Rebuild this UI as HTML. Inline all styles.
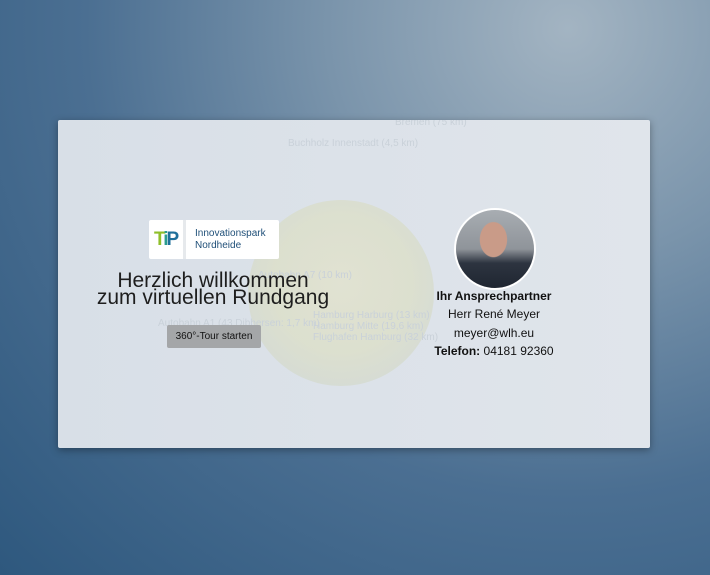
<!DOCTYPE html>
<html><head><meta charset="utf-8"><style>
body{margin:0;width:710px;height:575px;overflow:hidden;font-family:"Liberation Sans",sans-serif;
background:radial-gradient(ellipse at 80% 5%,#a3b4c2 0%,#7a94ab 30%,#4b6f92 60%,#2e587e 100%);position:relative}
.card{position:absolute;left:58px;top:120px;width:592px;height:328px;background:linear-gradient(90deg,#d8dfe7,#e0e5eb);border-radius:2px;box-shadow:0 2px 8px rgba(0,0,0,.35);overflow:hidden}
.globe{position:absolute;left:190px;top:80px;width:186px;height:186px;border-radius:50%;background:radial-gradient(circle at 50% 45%,#e2e2cc 0%,#dcdfc8 50%,#d3d9d0 80%,#d4dae0 100%);opacity:.8}
.faint{position:absolute;color:#c9d1d9;font-size:10px;white-space:nowrap}
.logo{position:absolute;left:91px;top:100px;width:130px;height:39px;background:#fff;border-radius:2px}
.logo .sep{position:absolute;left:34px;top:0;width:3px;height:39px;background:#e6e9ec}
.title{position:absolute;left:20px;width:270px;top:152px;text-align:center;font-size:21px;line-height:17px;color:#1e1e1e}
.btn{position:absolute;left:109px;top:205px;width:94px;height:23px;background:#a4a6a8;border-radius:2px;font-size:10px;text-align:center;line-height:23px;color:#111}
.photo{position:absolute;left:396px;top:88px;width:78px;height:78px;border-radius:50%;border:2px solid #fff;background:radial-gradient(ellipse 14px 18px at 48% 38%,#c99b88 0 95%,transparent 100%),linear-gradient(180deg,#a8adb2 0%,#8f949a 50%,#2d3440 68%,#1f2631 100%);overflow:hidden}
.info{position:absolute;left:356px;width:160px;text-align:center;font-size:12px;color:#111}
</style></head><body>
<div class="card">
 <div class="globe"></div>
 <div class="faint" style="left:230px;top:18px">Buchholz Innenstadt (4,5 km)</div>
 <div class="faint" style="left:337px;top:-3px">Bremen (75 km)</div>
 <div class="faint" style="left:200px;top:150px">Autobahn A7 (10 km)</div>
 <div class="faint" style="left:100px;top:198px">Autobahn A1 (43 Dibbersen: 1,7 km)</div>
 <div class="faint" style="left:255px;top:190px">Hamburg Harburg (13 km)<br>Hamburg Mitte (19,6 km)<br>Flughafen Hamburg (32 km)</div>
 <div class="logo"><div class="sep"></div>
  <div style="position:absolute;left:5px;top:9px;font:bold 19px 'Liberation Sans';letter-spacing:-2px"><span style="color:#8fbf2a">T</span><span style="color:#2b9d8e">i</span><span style="color:#1f6f9a">P</span></div>
  <div style="position:absolute;left:46px;top:8px;font-size:10px;line-height:12px;color:#1f4f78">Innovationspark<br>Nordheide</div>
 </div>
 <div class="title">Herzlich willkommen<br>zum virtuellen Rundgang</div>
 <div class="btn">360°-Tour starten</div>
 <div class="photo"></div>
 <div class="info" style="top:169px;font-weight:bold">Ihr Ansprechpartner</div>
 <div class="info" style="top:187px">Herr René Meyer</div>
 <div class="info" style="top:206px">meyer@wlh.eu</div>
 <div class="info" style="top:224px"><b>Telefon:</b> 04181 92360</div>
</div>
</body></html>
